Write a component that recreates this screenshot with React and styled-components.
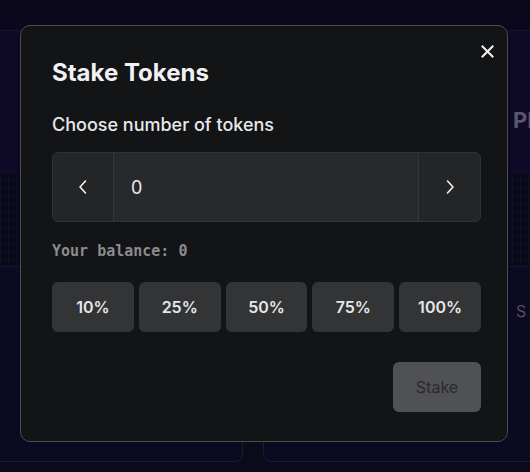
import React from "react";
import styled, { createGlobalStyle } from "styled-components";

const Global = createGlobalStyle`
  html, body { margin: 0; padding: 0; }
  body { background: #0e0b26; font-family: Inter, "Noto Sans", sans-serif; overflow: hidden; }
  * { box-sizing: border-box; }
`;

const Page = styled.div`
  width: 530px;
  height: 472px;
  display: flex;
  flex-direction: column;
  background: #0b0d1c;
  position: relative;
  overflow: hidden;
`;

const TopBar = styled.div`
  height: 31px;
  flex: none;
  background: #0d0a22;
  border-bottom: 1px solid #1a1738;
`;

const Hero = styled.div`
  height: 141px;
  flex: none;
  display: flex;
  justify-content: flex-end;
  padding-top: 76px;
  background: #100b2d;
  overflow: hidden;
`;

const HeroText = styled.span`
  font-size: 22px;
  line-height: 26px;
  font-weight: 700;
  color: #64637a;
  width: 17px;
  overflow: hidden;
  white-space: nowrap;
`;

const Band = styled.div`
  height: 95px;
  flex: none;
  background-color: #0b0b1e;
  background-image:
    linear-gradient(#12132a 1px, transparent 1px),
    linear-gradient(90deg, #12132a 1px, transparent 1px);
  background-size: 8px 8px;
  border-bottom: 1px solid #1c1a33;
`;

const Cards = styled.div`
  flex: none;
  display: grid;
  grid-template-columns: 243px 1fr;
  gap: 20px;
  height: 195px;
`;

const Card = styled.div`
  background: #0e0b28;
  border: 1px solid #221f3b;
  border-top: none;
  border-radius: 0 0 8px 8px;
  margin-left: ${p => (p.$first ? "-10px" : "0")};
  margin-right: ${p => (p.$first ? "0" : "-10px")};
  display: flex;
  justify-content: flex-end;
  padding-top: 34px;
  padding-right: 10px;
  overflow: hidden;
`;

const CardText = styled.span`
  font-size: 16px;
  line-height: 20px;
  color: #5d5c6c;
  width: 13px;
  overflow: hidden;
`;

const Overlay = styled.div`
  position: absolute;
  inset: 0;
  background: rgba(0, 0, 0, 0.12);
`;

const Modal = styled.div`
  position: absolute;
  left: 20px;
  top: 25px;
  width: 488px;
  height: 417px;
  background: #131416;
  border: 1px solid #4a4b4e;
  border-radius: 10px;
  padding: 31px 26px 0 31px;
  display: flex;
  flex-direction: column;
`;

const CloseBtn = styled.button`
  position: absolute;
  top: 19px;
  right: 13px;
  width: 13px;
  height: 13px;
  padding: 0;
  border: none;
  background: transparent;
  color: #f2f2f2;
  display: flex;
  align-items: center;
  justify-content: center;
`;

const Title = styled.h2`
  margin: 0;
  font-size: 24px;
  line-height: 32px;
  font-weight: 700;
  color: #f1f1f3;
`;

const Label = styled.div`
  margin-top: 23px;
  font-size: 18px;
  line-height: 26px;
  font-weight: 500;
  color: #e8e8ea;
`;

const Stepper = styled.div`
  margin-top: 14px;
  height: 70px;
  display: flex;
  border: 1px solid #313235;
  border-radius: 6px;
  overflow: hidden;
  background: #28292b;
`;

const StepBtn = styled.button`
  flex: none;
  width: ${p => p.$w}px;
  border: none;
  ${p => (p.$side === "left" ? "border-right" : "border-left")}: 1px solid #36373a;
  background: #242527;
  color: #f1f1f1;
  display: flex;
  align-items: center;
  justify-content: center;
  padding: 0;
`;

const Value = styled.div`
  flex: 1;
  display: flex;
  align-items: center;
  padding-left: 17px;
  font-size: 18px;
  color: #ececee;
`;

const Balance = styled.div`
  margin-top: 20px;
  font-family: "DejaVu Sans Mono", "Liberation Mono", monospace;
  font-weight: 700;
  font-size: 15px;
  line-height: 18px;
  color: #8a8b8e;
`;

const Percents = styled.div`
  margin-top: 22px;
  display: grid;
  grid-template-columns: repeat(5, 1fr);
  gap: 5px;
`;

const PctBtn = styled.button`
  height: 50px;
  border: none;
  border-radius: 6px;
  background: #333436;
  color: #e6e6e8;
  font-family: Inter, sans-serif;
  font-weight: 600;
  font-size: 16px;
  padding: 0;
`;

const Footer = styled.div`
  margin-top: 30px;
  display: flex;
  justify-content: flex-end;
`;

const StakeBtn = styled.button`
  width: 88px;
  height: 50px;
  border: none;
  border-radius: 6px;
  background: #505153;
  color: #2a2b2d;
  font-family: Inter, sans-serif;
  font-size: 16px;
  padding: 0;
`;

const Chevron = ({ dir }) => (
  <svg width="16" height="16" viewBox="0 0 16 16" fill="none" stroke="currentColor" strokeWidth="1.6" strokeLinecap="round" strokeLinejoin="round">
    {dir === "left" ? <path d="M10.5 2 L5 8 L10.5 14" /> : <path d="M5.5 2 L11 8 L5.5 14" />}
  </svg>
);

export default function App() {
  return (
    <>
      <Global />
      <Page>
        <TopBar />
        <Hero>
          <HeroText>PI</HeroText>
        </Hero>
        <Band />
        <Cards>
          <Card $first />
          <Card>
            <CardText>S</CardText>
          </Card>
        </Cards>
        <Overlay />
        <Modal>
          <CloseBtn aria-label="Close">
            <svg width="13" height="13" viewBox="0 0 13 13" stroke="currentColor" strokeWidth="2" strokeLinecap="square">
              <path d="M1.5 1.5 L11.5 11.5 M11.5 1.5 L1.5 11.5" />
            </svg>
          </CloseBtn>
          <Title>Stake Tokens</Title>
          <Label>Choose number of tokens</Label>
          <Stepper>
            <StepBtn $side="left" $w={61}><Chevron dir="left" /></StepBtn>
            <Value>0</Value>
            <StepBtn $side="right" $w={62}><Chevron dir="right" /></StepBtn>
          </Stepper>
          <Balance>Your balance: 0</Balance>
          <Percents>
            {["10%", "25%", "50%", "75%", "100%"].map(p => (
              <PctBtn key={p}>{p}</PctBtn>
            ))}
          </Percents>
          <Footer>
            <StakeBtn>Stake</StakeBtn>
          </Footer>
        </Modal>
      </Page>
    </>
  );
}
